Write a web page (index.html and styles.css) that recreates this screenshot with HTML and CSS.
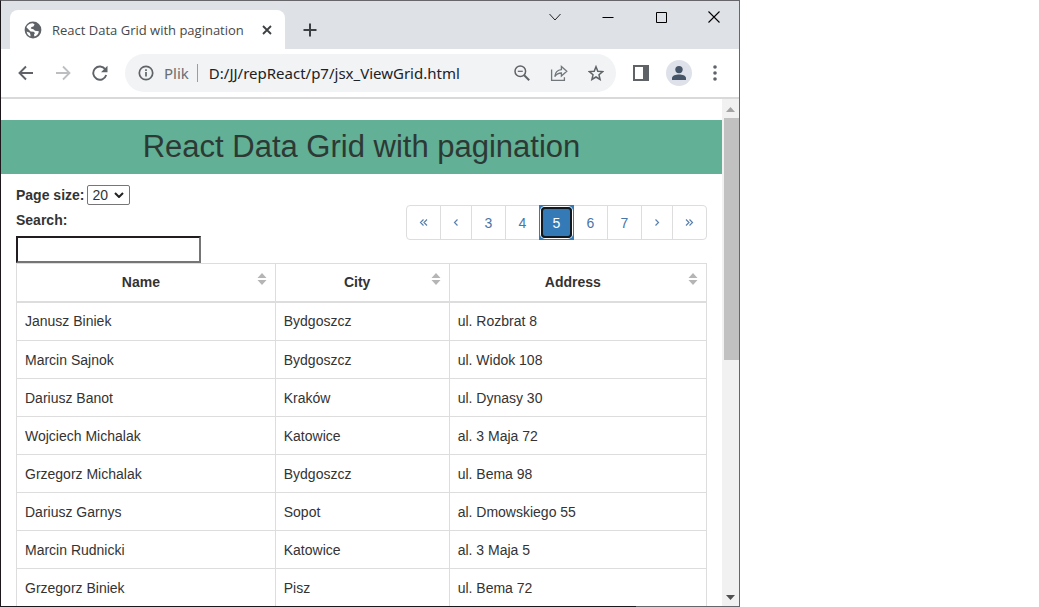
FILE: index.html
```html
<!DOCTYPE html>
<html lang="pl">
<head>
<meta charset="utf-8">
<title>React Data Grid with pagination</title>
<link rel="stylesheet" href="styles.css">
</head>
<body>
<div class="window">
  <header class="tabstrip">
    <div class="tab">
      <svg class="tab-icon" width="18" height="18" viewBox="0 0 18 18"><circle cx="9" cy="9" r="8.4" fill="#5f6368"/><path d="M2.400 6.200C3.600 3.600 6 2.200 8.800 2.200L10.600 3.400 9.400 5.400 7.400 6 6.800 7.600 9.400 8.200 11 9.800 14.800 10.200C14.800 12.600 13 14.800 10.400 15.600L10 13.600 11 12 9.600 10.800 6.600 10.600 4.600 8.600z" fill="#fff"/><path d="M2.600 10.400l3.200 1.400.8 2.400-.4 1.200C4.200 14.400 2.900 12.600 2.600 10.400z" fill="#fff"/></svg>
      <span class="tab-title">React Data Grid with pagination</span>
      <button class="icon-button" aria-label="Close tab"><svg width="10" height="10" viewBox="0 0 10 10"><path d="M1 1l8 8M9 1L1 9" stroke="#3c4043" stroke-width="1.8"/></svg></button>
    </div>
    <button class="icon-button new-tab" aria-label="New tab"><svg width="14" height="14" viewBox="0 0 14 14"><path d="M7 .5v13M.5 7h13" stroke="#3c4043" stroke-width="2"/></svg></button>
    <div class="window-controls">
      <button class="icon-button" aria-label="Search tabs"><svg width="12" height="12" viewBox="0 0 12 12"><path d="M.5 3l5.500 6 5.500-6" fill="none" stroke="#222"/></svg></button>
      <button class="icon-button" aria-label="Minimize"><svg width="12" height="12" viewBox="0 0 12 12"><path d="M.5 6.500h11" stroke="#000"/></svg></button>
      <button class="icon-button" aria-label="Maximize"><svg width="12" height="12" viewBox="0 0 12 12"><path d="M1.500 1.500h10v10h-10z" fill="none" stroke="#000"/></svg></button>
      <button class="icon-button" aria-label="Close"><svg width="12" height="12" viewBox="0 0 12 12"><path d="M.5 .5l11 11M11.500.5l-11 11" stroke="#000" stroke-width="1.100"/></svg></button>
    </div>
  </header>

  <nav class="toolbar">
    <button class="icon-button" aria-label="Back"><svg width="16" height="16" viewBox="0 0 16 16"><path d="M15 8H2M8 1.500L1.500 8 8 14.500" fill="none" stroke="#5f6368" stroke-width="1.900"/></svg></button>
    <button class="icon-button" aria-label="Forward"><svg width="16" height="16" viewBox="0 0 16 16"><path d="M1 8h13M8 1.500L14.500 8 8 14.500" fill="none" stroke="#bcbec1" stroke-width="1.800"/></svg></button>
    <button class="icon-button" aria-label="Reload"><svg width="16" height="16" viewBox="0 0 16 16"><path d="M13.300 4.400A6.600 6.600 0 1 0 14.200 10" fill="none" stroke="#5f6368" stroke-width="1.900"/><path d="M15.500.8v6.500H9z" fill="#5f6368"/></svg></button>
    <div class="address">
      <svg width="16" height="16" viewBox="0 0 16 16"><circle cx="8" cy="8" r="6.700" fill="none" stroke="#5f6368" stroke-width="1.700"/><path d="M8 7v4.600M8 4.200v1.700" stroke="#5f6368" stroke-width="1.700"/></svg>
      <span class="scheme">Plik</span>
      <input class="url" type="text" aria-label="Address" value="D:/JJ/repReact/p7/jsx_ViewGrid.html">
      <button class="icon-button" aria-label="Zoom"><svg width="16" height="16" viewBox="0 0 16 16"><circle cx="6.300" cy="6.300" r="5.300" fill="none" stroke="#5f6368" stroke-width="1.500"/><path d="M3.800 6.300h5" stroke="#5f6368" stroke-width="1.200"/><path d="M10.200 10.200l5 5" stroke="#5f6368" stroke-width="2"/></svg></button>
      <button class="icon-button" aria-label="Share"><svg width="18" height="18" viewBox="0 0 18 18"><path d="M1.600 5.500v10.900h12.800v-3.200M4.800 12.600C5.200 8.200 7.600 5.900 11.400 5.600V2.500l5.400 4.800-5.400 4.800V9C8.400 9 6.400 10.200 4.800 12.600z" fill="none" stroke="#73777c" stroke-width="1.300"/></svg></button>
      <button class="icon-button" aria-label="Bookmark"><svg width="16" height="16" viewBox="0 0 16 16"><path d="M8 1.700l1.800 4.500 4.900.4-3.700 3.200 1.100 4.700L8 12l-4.100 2.500L5 9.800 1.300 6.600l4.900-.4z" fill="none" stroke="#5f6368" stroke-width="1.500"/></svg></button>
    </div>
    <button class="icon-button" aria-label="Side panel"><svg width="16" height="16" viewBox="0 0 16 16"><path d="M0 0h16v16H0zM2 2v12h8V2z" fill="#5f6368" fill-rule="evenodd"/></svg></button>
    <button class="icon-button avatar" aria-label="Profile"><svg width="16" height="16" viewBox="0 0 16 16"><circle cx="8" cy="4.600" r="3.700" fill="#475569"/><path d="M1 15v-2c0-2.500 4-3.500 7-3.500s7 1 7 3.500v2z" fill="#475569"/></svg></button>
    <button class="icon-button menu" aria-label="Menu"><svg width="4" height="16" viewBox="0 0 4 16"><g fill="#5f6368"><circle cx="2" cy="2" r="1.800"/><circle cx="2" cy="8" r="1.800"/><circle cx="2" cy="14" r="1.800"/></g></svg></button>
  </nav>

  <div class="viewport">
    <main class="page">
      <h1 class="page-title">React Data Grid with pagination</h1>
      <div class="grid-view">
        <div class="controls">
          <div class="filters">
            <div class="page-size"><label for="page-size">Page size:</label><div class="select-wrap"><select id="page-size"><option>20</option></select><svg class="chevron" width="10" height="6" viewBox="0 0 10 6"><path d="M1 1l4 4 4-4" fill="none" stroke="#222" stroke-width="2"/></svg></div></div>
            <label class="search-label" for="search">Search:</label>
            <input class="search" id="search" type="text">
          </div>
          <ul class="pagination">
            <li><a href="#first" aria-label="First"><svg width="9" height="7" viewBox="0 0 9 7"><path d="M4.500.5l-3 3 3 3M8 .5l-3 3 3 3" fill="none" stroke="#5a80ad" stroke-width="1.200"/></svg></a></li>
            <li><a href="#previous" aria-label="Previous"><svg width="6" height="7" viewBox="0 0 6 7"><path d="M4.500.5l-3 3 3 3" fill="none" stroke="#5a80ad" stroke-width="1.200"/></svg></a></li>
            <li><a class="number" href="#3">3</a></li>
            <li><a class="number" href="#4">4</a></li>
            <li><a class="number current" href="#5" aria-current="page">5</a></li>
            <li><a class="number" href="#6">6</a></li>
            <li><a class="number" href="#7">7</a></li>
            <li><a href="#next" aria-label="Next"><svg width="6" height="7" viewBox="0 0 6 7"><path d="M1.500.5l3 3-3 3" fill="none" stroke="#5a80ad" stroke-width="1.200"/></svg></a></li>
            <li><a href="#last" aria-label="Last"><svg width="9" height="7" viewBox="0 0 9 7"><path d="M1 .5l3 3-3 3M4.500.5l3 3-3 3" fill="none" stroke="#5a80ad" stroke-width="1.200"/></svg></a></li>
          </ul>
        </div>
        <table class="grid">
          <colgroup><col class="col-name"><col class="col-city"><col class="col-address"></colgroup>
          <thead>
            <tr>
              <th><div class="heading"><span>Name</span><svg width="10" height="14" viewBox="0 0 10 14"><path d="M5 1l4.500 5h-9zM5 13L.5 8h9z" fill="#b5b5b5"/></svg></div></th>
              <th><div class="heading"><span>City</span><svg width="10" height="14" viewBox="0 0 10 14"><path d="M5 1l4.500 5h-9zM5 13L.5 8h9z" fill="#b5b5b5"/></svg></div></th>
              <th><div class="heading"><span>Address</span><svg width="10" height="14" viewBox="0 0 10 14"><path d="M5 1l4.500 5h-9zM5 13L.5 8h9z" fill="#b5b5b5"/></svg></div></th>
            </tr>
          </thead>
          <tbody>
            <tr><td>Janusz Biniek</td><td>Bydgoszcz</td><td>ul. Rozbrat 8</td></tr>
            <tr><td>Marcin Sajnok</td><td>Bydgoszcz</td><td>ul. Widok 108</td></tr>
            <tr><td>Dariusz Banot</td><td>Kraków</td><td>ul. Dynasy 30</td></tr>
            <tr><td>Wojciech Michalak</td><td>Katowice</td><td>al. 3 Maja 72</td></tr>
            <tr><td>Grzegorz Michalak</td><td>Bydgoszcz</td><td>ul. Bema 98</td></tr>
            <tr><td>Dariusz Garnys</td><td>Sopot</td><td>al. Dmowskiego 55</td></tr>
            <tr><td>Marcin Rudnicki</td><td>Katowice</td><td>al. 3 Maja 5</td></tr>
            <tr><td>Grzegorz Biniek</td><td>Pisz</td><td>ul. Bema 72</td></tr>
          </tbody>
        </table>
      </div>
    </main>
    <div class="scrollbar">
      <svg class="arrow" width="9" height="5" viewBox="0 0 9 5"><path d="M4.500 0L9 5H0z" fill="#a3a3a3"/></svg>
      <div class="track"><div class="thumb"></div></div>
      <svg class="arrow" width="9" height="5" viewBox="0 0 9 5"><path d="M0 0h9L4.500 5z" fill="#505050"/></svg>
    </div>
  </div>
</div>
</body>
</html>
```

FILE: styles.css
```css
* { box-sizing: border-box; }

body {
  margin: 0;
  background: #fff;
  color: #333;
  font: 14px/20px "Liberation Sans", Arial, sans-serif;
}

.window {
  display: flex;
  flex-direction: column;
  max-width: 740px;
  height: 100vh;
  padding-bottom: 1px;
  border: 1px solid #66666b;
  border-left-color: #1b171b;
  border-bottom: 0;
  background: linear-gradient(90deg, #1b171b 86%, #66666b 86%);
}

.icon-button {
  display: flex;
  align-items: center;
  justify-content: center;
  flex: none;
  padding: 0;
  border: 0;
  background: none;
}

/* Tab strip */
.tabstrip {
  display: flex;
  flex: none;
  height: 48px;
  padding-left: 9px;
  background: #dee1e6;
}

.tab {
  display: flex;
  align-items: center;
  width: 275px;
  margin-top: 9px;
  padding: 0 13px 0 14px;
  border-radius: 8px 8px 0 0;
  background: #fff;
}

.tab-title {
  flex: 1;
  padding-left: 10px;
  color: #45484c;
  font: 13px/20px "Open Sans", sans-serif;
  white-space: nowrap;
}

.new-tab {
  width: 50px;
  margin-top: 10px;
}

.window-controls {
  display: flex;
  gap: 41px;
  height: 32px;
  margin-left: auto;
  padding-right: 19px;
}

/* Toolbar */
.toolbar {
  display: flex;
  flex: none;
  align-items: center;
  gap: 21px;
  height: 50px;
  padding: 0 22px 0 17px;
  border-bottom: 2px solid #d9d9db;
  background: #fff;
}

.address {
  display: flex;
  flex: 1;
  align-items: center;
  gap: 20px;
  min-width: 0;
  height: 38px;
  margin: 0 -4px;
  padding: 0 12px 0 13px;
  border-radius: 19px;
  background: #f1f3f4;
  color: #202124;
  font: 15px/20px "Noto Sans", sans-serif;
}

.scheme {
  margin-left: -10px;
  padding-right: 8px;
  border-right: 1px solid #9a9da1;
  color: #6a6d71;
  line-height: 18px;
}

.url {
  flex: 1;
  min-width: 0;
  margin-left: -9px;
  padding: 0;
  border: 0;
  background: none;
  color: inherit;
  font: inherit;
}

.avatar {
  width: 26px;
  height: 26px;
  margin: 0 -4px;
  border-radius: 50%;
  background: #dee1ea;
}

.menu { margin-left: 4px; }

/* Page */
.viewport {
  display: flex;
  flex: 1;
  min-height: 0;
  background: #fff;
}

.page {
  flex: 1;
  overflow: hidden;
}

.page-title {
  margin: 21px 0 10px;
  padding: 10px 0;
  background: #62b095;
  color: #2d3934;
  font-size: 31px;
  font-weight: 400;
  line-height: 34px;
  text-align: center;
}

.grid-view { padding: 0 15px; }

.controls {
  display: flex;
  align-items: flex-start;
  justify-content: space-between;
}

.filters {
  display: flex;
  flex-direction: column;
  font-weight: 700;
}

.page-size {
  display: flex;
  align-items: center;
  gap: 3px;
  height: 22px;
}

.select-wrap { position: relative; }

.select-wrap select {
  display: block;
  width: 43px;
  height: 20px;
  padding: 0 4px;
  appearance: none;
  border: 1px solid #767676;
  border-radius: 2px;
  background: #fff;
  color: #333;
  font: inherit;
  font-weight: 400;
  line-height: 18px;
}

.chevron {
  position: absolute;
  top: 7px;
  right: 6px;
  pointer-events: none;
}

.search-label { margin: 4px 0 6px; }

.search {
  width: 185px;
  height: 27px;
  border: 2px solid;
  border-color: #201c20 #757575 #757575 #201c20;
  background: #fff;
  font: inherit;
}

.pagination {
  display: flex;
  margin: 21px 0 0;
  padding: 0;
  list-style: none;
}

.pagination a {
  display: flex;
  align-items: center;
  justify-content: center;
  height: 35px;
  margin-left: -1px;
  padding: 0 12px;
  border: 1px solid #ddd;
  color: #4a75a6;
  text-decoration: none;
}

.pagination .number { min-width: 35px; }
.pagination li:first-child a { border-radius: 4px 0 0 4px; }
.pagination li:last-child a { border-radius: 0 4px 4px 0; }

.pagination .current {
  position: relative;
  border-color: #337ab7;
  background: #337ab7;
  color: #fff;
}

/* Focus ring drawn inside the active page cell */
.pagination .current::after {
  content: "";
  position: absolute;
  inset: 1px;
  border: 2px solid #101820;
  border-radius: 4px;
  box-shadow: 0 0 0 1px #fff;
}

/* Data table */
.grid {
  width: 100%;
  border-collapse: collapse;
  table-layout: fixed;
}

.col-name { width: 37.5%; }
.col-city { width: 25.2%; }

.grid th,
.grid td {
  height: 38px;
  padding: 8px;
  border: 1px solid #ddd;
  text-align: left;
}

.grid th { border-bottom-width: 2px; }
.grid tbody tr:first-child td { height: 39px; }

.heading {
  display: flex;
  align-items: flex-start;
}

.heading span {
  flex: 1;
  text-align: center;
}

/* Scrollbar */
.scrollbar {
  display: flex;
  flex: none;
  flex-direction: column;
  align-items: center;
  width: 17px;
  background: #f1f1f1;
}

.arrow {
  flex: none;
  margin: 8px 0 6px;
}

.track {
  flex: 1;
  align-self: stretch;
}

.thumb {
  height: 51.5%;
  margin-left: 2px;
  background: #c1c1c1;
}
```
